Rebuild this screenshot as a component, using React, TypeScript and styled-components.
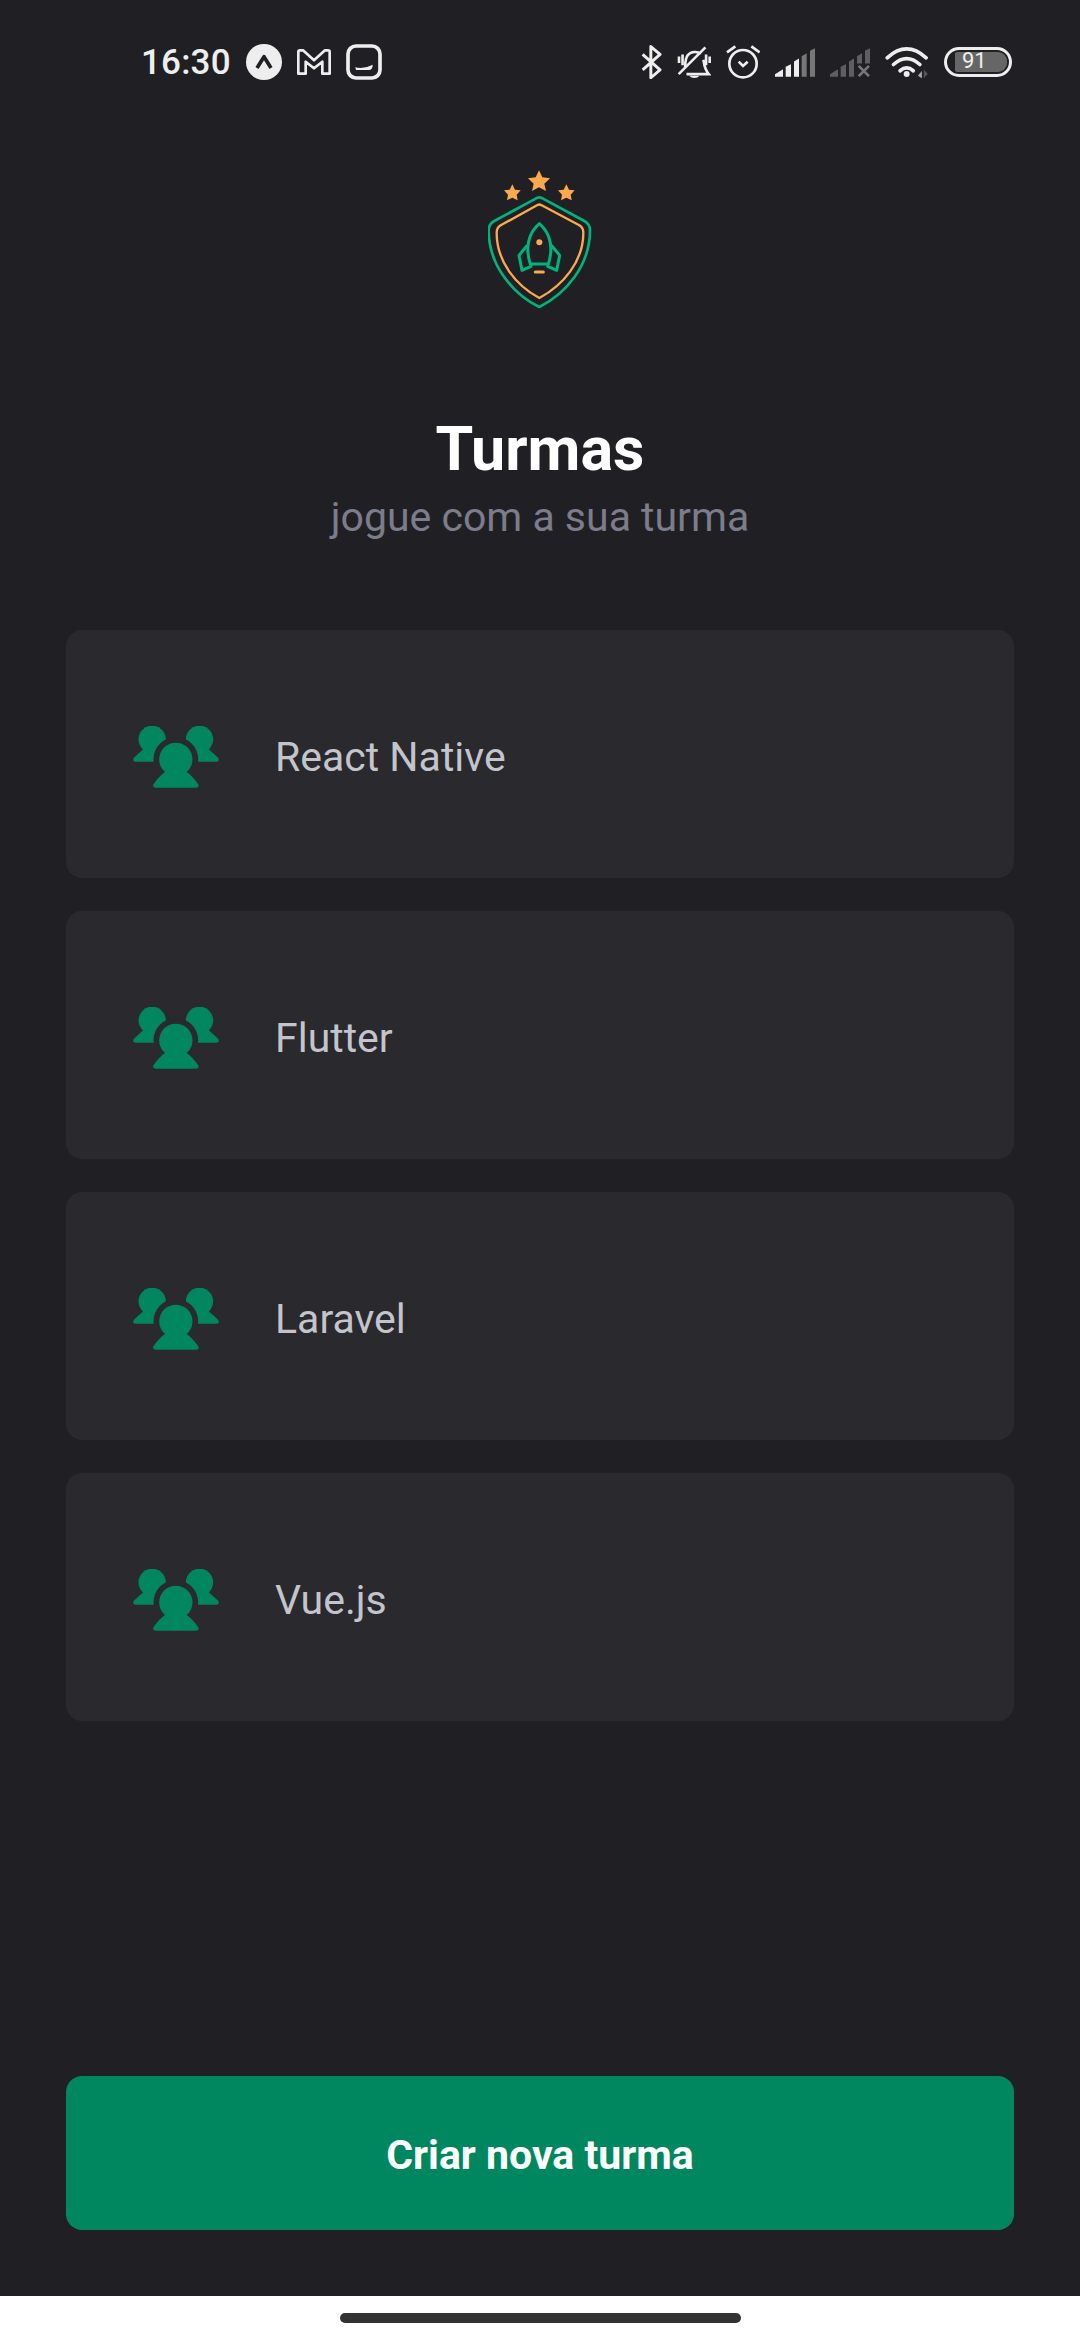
import React from 'react'
import styled, { createGlobalStyle } from 'styled-components'

const GlobalStyle = createGlobalStyle`
  html, body {
    margin: 0;
    padding: 0;
    background: #202024;
  }
  * {
    box-sizing: border-box;
  }
`

const Page = styled.div`
  width: 1080px;
  height: 2340px;
  display: flex;
  flex-direction: column;
  background: #202024;
  font-family: Roboto, 'Noto Sans', sans-serif;
  overflow: hidden;
`

const StatusBar = styled.div`
  height: 124px;
  flex-shrink: 0;
  display: flex;
  align-items: center;
  justify-content: space-between;
  padding: 0 68px 0 141px;
  color: #eeeeee;
`

const StatusGroup = styled.div`
  display: flex;
  align-items: center;
  gap: 15px;
`

const Clock = styled.span`
  font-size: 35px;
  font-weight: 500;
  letter-spacing: 0.2px;
`

const Battery = styled.div`
  width: 68px;
  height: 30px;
  border: 3px solid #eeeeee;
  border-radius: 15px;
  padding: 2px;
  display: flex;
`

const BatteryLevel = styled.div`
  flex: 1;
  margin-left: 6px;
  background: #666666;
  border-radius: 2px 9px 9px 2px;
  color: #eeeeee;
  font-size: 22px;
  line-height: 18px;
  padding-left: 7px;
`

const Content = styled.main`
  flex: 1;
  display: flex;
  flex-direction: column;
  padding: 0 66px 66px;
`

const Logo = styled.svg`
  display: block;
  align-self: center;
  margin-top: 46px;
`

const Title = styled.h1`
  margin: 107px 0 0;
  color: #ffffff;
  font-size: 61px;
  line-height: 64px;
  font-weight: 700;
  text-align: center;
`

const Subtitle = styled.p`
  margin: 11px 0 0;
  color: #7c7c8a;
  font-size: 41px;
  line-height: 50px;
  text-align: center;
`

const GroupList = styled.div`
  margin-top: 88px;
  display: flex;
  flex-direction: column;
  gap: 33px;
`

const GroupCard = styled.div`
  height: 248px;
  display: flex;
  align-items: center;
  padding: 5px 0 0 67px;
  background: #29292e;
  border-radius: 16px;
`

const GroupName = styled.span`
  margin-left: 56px;
  color: #c4c4cc;
  font-size: 41px;
`

const CreateButton = styled.button`
  margin-top: auto;
  height: 154px;
  border: 0;
  border-radius: 16px;
  padding: 3px 0 0;
  background: #00875f;
  color: #ffffff;
  font-family: inherit;
  font-size: 41px;
  font-weight: 700;
`

const HomeArea = styled.div`
  height: 44px;
  flex-shrink: 0;
  display: flex;
  justify-content: center;
  padding-top: 17px;
  background: #ffffff;
`

const HomePill = styled.div`
  width: 401px;
  height: 10px;
  border-radius: 5px;
  background: #333333;
`

const groups = ['React Native', 'Flutter', 'Laravel', 'Vue.js']

const UsersIcon = () => (
  <svg width="86" height="62" viewBox="250 318 257 186" aria-hidden="true">
    <g fill="#00875f">
      <circle cx="307" cy="358" r="41" />
      <circle cx="449" cy="358" r="41" />
      <path d="M252 413 L285 383 L330 383 L330 425 L258 425 Q246 425 252 413 Z" />
      <path d="M505 413 L472 383 L427 383 L427 425 L499 425 Q511 425 505 413 Z" />
    </g>
    <circle cx="378" cy="418" r="67" fill="#29292e" />
    <g fill="#00875f">
      <circle cx="378" cy="418" r="50" />
      <path d="M311 493 Q325 470 350 452 L406 452 Q431 470 445 493 Q449 503 439 503 L317 503 Q307 503 311 493 Z" />
    </g>
  </svg>
)

const LogoMark = () => (
  <Logo width="104" height="140" viewBox="56 44 312 420" aria-hidden="true">
    <g fill="#fba94c">
      <path d="M209 45 L219 66 L242 69 L225 85 L230 107 L209 96 L188 107 L193 85 L176 69 L199 66 Z" />
      <path d="M129 87 L137 103 L154 105 L142 118 L145 135 L129 127 L113 135 L116 118 L104 105 L121 103 Z" />
      <path d="M291 87 L299 103 L316 105 L304 118 L307 135 L291 127 L275 135 L278 118 L266 105 L283 103 Z" />
      <circle cx="210" cy="261" r="9" />
    </g>
    <g fill="none" strokeLinejoin="round" strokeLinecap="round">
      <path
        stroke="#00b37e"
        strokeWidth="8"
        d="M199 130 Q210 122 221 130 L345 197 Q362 206 362 225 C362 330 290 415 210 455 C130 415 58 330 58 225 Q58 206 75 197 Z"
      />
      <path
        stroke="#fba94c"
        strokeWidth="7"
        d="M203 150 Q210 145 217 150 L330 210 Q342 217 342 232 C342 320 280 390 210 428 C140 390 82 320 82 232 Q82 217 94 210 Z"
      />
      <path
        stroke="#00b37e"
        strokeWidth="9"
        d="M210 205 C175 235 168 280 183 326 L237 326 C252 280 245 235 210 205 Z"
      />
      <path stroke="#00b37e" strokeWidth="9" d="M172 272 L149 300 L158 345 L185 333" />
      <path stroke="#00b37e" strokeWidth="9" d="M248 272 L271 300 L262 345 L235 333" />
      <path stroke="#fba94c" strokeWidth="9" d="M198 350 L222 350" />
    </g>
  </Logo>
)

const ExpoIcon = () => (
  <svg width="36" height="36" viewBox="0 0 108 108" aria-hidden="true">
    <circle cx="54" cy="54" r="54" fill="#eeeeee" />
    <path d="M33 72 L54 38 L75 72" fill="none" stroke="#202024" strokeWidth="11" strokeLinejoin="round" />
  </svg>
)

const GmailIcon = () => (
  <svg width="34" height="26" viewBox="0 0 102 78" aria-hidden="true">
    <path
      d="M4 8 Q4 4 9 4 L18 4 L51 34 L84 4 L93 4 Q98 4 98 8 L98 74 L76 74 L76 38 L51 58 L26 38 L26 74 L4 74 Z"
      fill="none"
      stroke="#eeeeee"
      strokeWidth="8"
      strokeLinejoin="round"
    />
  </svg>
)

const InboxIcon = () => (
  <svg width="36" height="36" viewBox="0 0 108 108" aria-hidden="true">
    <rect x="6" y="6" width="96" height="96" rx="24" fill="none" stroke="#eeeeee" strokeWidth="11" />
    <path d="M28 70 Q55 76 80 62 Q80 78 68 78 L30 78 Z" fill="#eeeeee" />
  </svg>
)

const BluetoothIcon = () => (
  <svg width="21" height="34" viewBox="60 75 64 102" aria-hidden="true">
    <path
      d="M65 103 L118 150 L90 174 L90 79 L118 103 L65 150"
      fill="none"
      stroke="#eeeeee"
      strokeWidth="9"
      strokeLinejoin="round"
    />
  </svg>
)

const MutedBellIcon = () => (
  <svg width="34" height="32" viewBox="170 76 102 98" aria-hidden="true">
    <g fill="none" stroke="#eeeeee" strokeWidth="8">
      <path d="M242 100 C232 92 212 92 202 104 C194 114 194 125 194 140" />
      <path d="M250 118 C252 130 252 145 266 162 L198 162" />
      <path d="M174 162 L256 80" />
      <path d="M175 108 L175 128 M186 102 L186 135 M258 102 L258 135 M269 108 L269 128" />
    </g>
    <path d="M206 167 L238 167 Q232 174 222 174 Q212 174 206 167 Z" fill="#eeeeee" />
  </svg>
)

const AlarmIcon = () => (
  <svg width="34" height="34" viewBox="322 75 102 102" aria-hidden="true">
    <g fill="none" stroke="#eeeeee" strokeWidth="8">
      <circle cx="373" cy="131" r="41" />
      <path d="M360 125 L373 138 L387 125" />
      <path d="M325 97 L350 79 M398 79 L423 97" />
    </g>
  </svg>
)

const SignalIcon = () => (
  <svg width="40" height="29" viewBox="468 82 120 86" aria-hidden="true">
    <path d="M468 168 L468 160 L492 145 L492 168 Z" fill="#eeeeee" />
    <path d="M500 168 L500 138 L516 130 L516 168 Z" fill="#eeeeee" />
    <path d="M525 168 L525 122 L540 113 L540 168 Z" fill="#eeeeee" />
    <path d="M548 168 L548 106 L563 97 L563 168 Z" fill="#777777" />
    <path d="M573 168 L573 90 L588 82 L588 168 Z" fill="#777777" />
  </svg>
)

const NoSignalIcon = () => (
  <svg width="40" height="29" viewBox="630 82 120 86" aria-hidden="true">
    <g fill="#5f5f62">
      <path d="M630 168 L630 160 L654 145 L654 168 Z" />
      <path d="M662 168 L662 138 L678 130 L678 168 Z" />
      <path d="M687 168 L687 122 L702 113 L702 168 Z" />
      <path d="M711 128 L711 106 L726 97 L726 128 Z" />
      <path d="M735 128 L735 90 L750 82 L750 128 Z" />
    </g>
    <path d="M716 135 L747 166 M747 135 L716 166" stroke="#777777" strokeWidth="8" />
  </svg>
)

const WifiIcon = () => (
  <svg width="44" height="33" viewBox="798 80 130 100" aria-hidden="true">
    <g fill="none" stroke="#eeeeee" strokeWidth="11" strokeLinecap="round">
      <path d="M803 116 Q862 62 921 116" />
      <path d="M822 136 Q862 100 902 136" />
      <path d="M842 155 Q862 138 882 155" />
    </g>
    <circle cx="862" cy="165" r="9" fill="#eeeeee" />
    <path d="M908 178 L908 156 L896 170 Z" fill="#aaaaaa" />
    <path d="M914 152 L914 178 L926 164 Z" fill="#555555" />
  </svg>
)

const App = () => {
  return (
    <Page>
      <GlobalStyle />
      <StatusBar>
        <StatusGroup>
          <Clock>16:30</Clock>
          <ExpoIcon />
          <GmailIcon />
          <InboxIcon />
        </StatusGroup>
        <StatusGroup>
          <BluetoothIcon />
          <MutedBellIcon />
          <AlarmIcon />
          <SignalIcon />
          <NoSignalIcon />
          <WifiIcon />
          <Battery>
            <BatteryLevel>91</BatteryLevel>
          </Battery>
        </StatusGroup>
      </StatusBar>
      <Content>
        <LogoMark />
        <Title>Turmas</Title>
        <Subtitle>jogue com a sua turma</Subtitle>
        <GroupList>
          {groups.map((group) => (
            <GroupCard key={group}>
              <UsersIcon />
              <GroupName>{group}</GroupName>
            </GroupCard>
          ))}
        </GroupList>
        <CreateButton>Criar nova turma</CreateButton>
      </Content>
      <HomeArea>
        <HomePill />
      </HomeArea>
    </Page>
  )
}

export default App
